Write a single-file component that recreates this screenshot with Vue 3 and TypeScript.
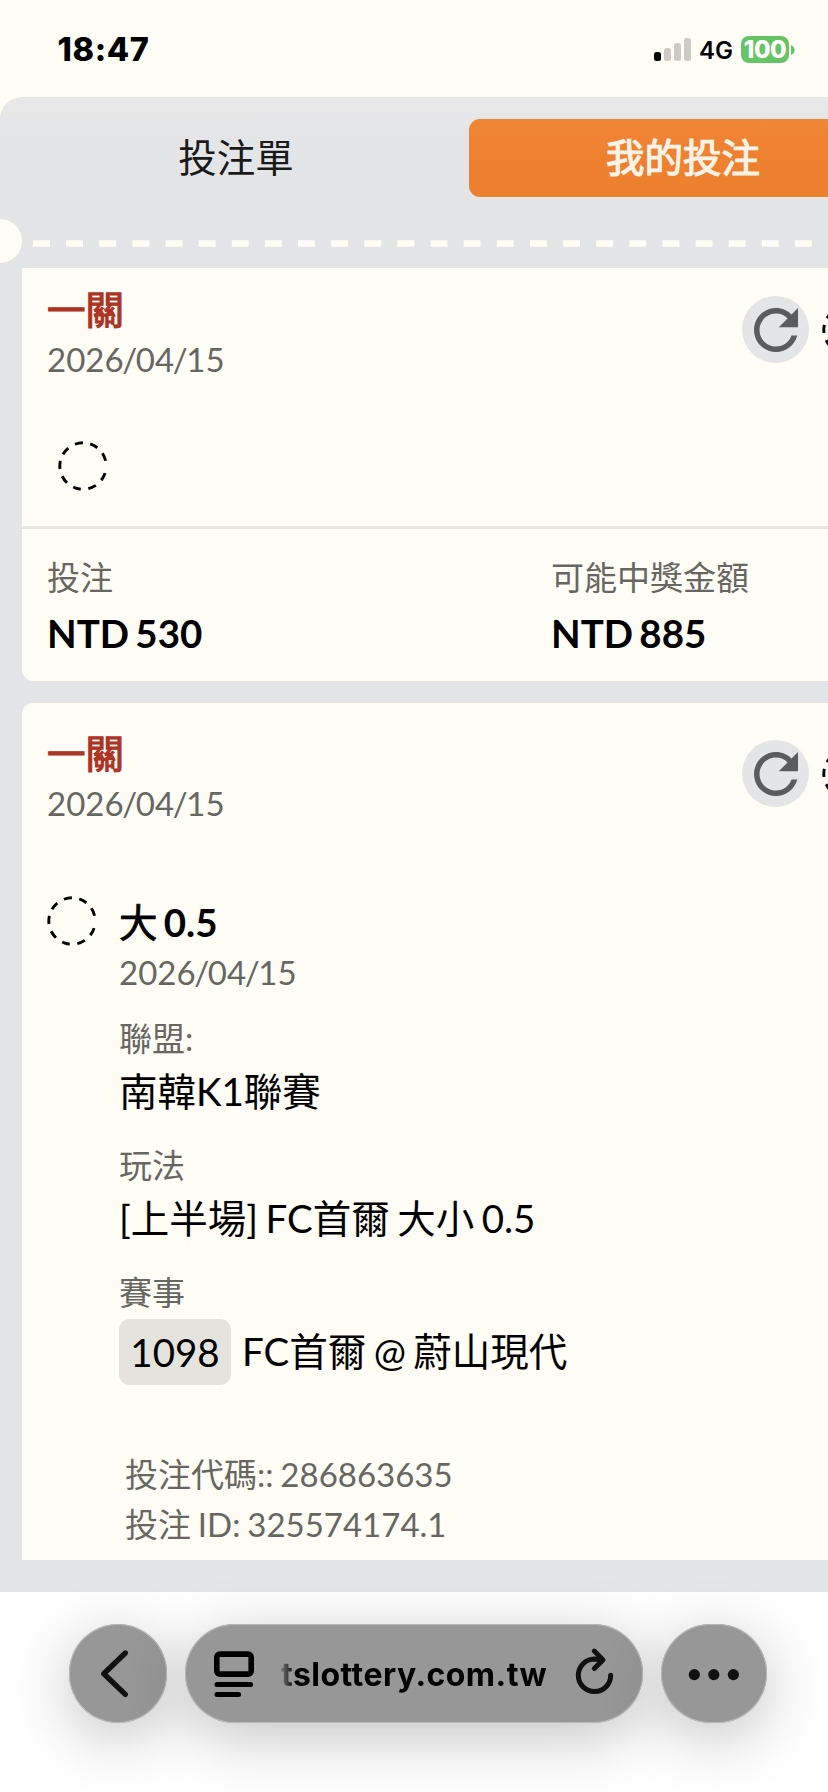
<script setup lang="ts">
interface Field {
  label: string
  value: string
}

const signalBars = [9, 13, 18, 23]
const dateParts = ['2026', '04', '15']

const totals: Field[] = [
  { label: '投注', value: 'NTD 530' },
  { label: '可能中獎金額', value: 'NTD 885' },
]

const details: Field[] = [
  { label: '聯盟:', value: '南韓K1聯賽' },
  { label: '玩法', value: '[上半場] FC首爾 大小 0.5' },
]

const dashes = [...Array(8).fill('20 18.6'), '20 31.2'].join(' ')
const refreshPath =
  'M17.65 6.35C16.2 4.9 14.21 4 12 4c-4.42 0-7.99 3.58-7.99 8s3.57 8 7.99 8c3.73 0 6.84-2.55 7.73-6h-2.08c-.82 2.33-3.04 4-5.65 4-3.31 0-6-2.69-6-6s2.69-6 6-6c1.66 0 3.14.69 4.22 1.78L13 11h7V4l-2.35 2.35z'
</script>

<template>
  <div class="screen">
    <header class="status">
      <span class="time">18:47</span>
      <div class="indicators">
        <div class="signal">
          <i v-for="(h, i) in signalBars" :key="h" :class="{ on: i === 0 }" :style="{ height: h + 'px' }"></i>
        </div>
        <span class="network">4G</span>
        <span class="battery">100</span>
        <svg class="nub" width="4" height="10" viewBox="0 0 4 10"><path d="M0 0Q3.6 1.6 3.6 5T0 10Z" fill="#65c466" /></svg>
      </div>
    </header>

    <main class="panel">
      <nav class="tabs">
        <div class="tab">投注單</div>
        <div class="tab active">我的投注</div>
      </nav>

      <div class="tear">
        <span class="notch"></span>
        <svg class="perforation" width="795" height="7">
          <line x1="0" y1="3.5" x2="795" y2="3.5" stroke="#fffdf6" stroke-width="6.4" stroke-dasharray="16.9 16.23" />
        </svg>
      </div>

      <section class="card first">
        <div class="head">
          <div>
            <div class="title">一關</div>
            <div class="muted"><template v-for="(p, i) in dateParts" :key="p"><span v-if="i" class="slash">/</span>{{ p }}</template></div>
          </div>
          <div class="actions">
            <span class="refresh"><svg width="66" height="66" viewBox="0 0 24 24"><path :d="refreshPath" fill="#5b5c5e" /></svg></span>
            <svg class="loader" width="50" height="50" viewBox="-25 -25 50 50"><circle r="23.2" pathLength="360" :stroke-dasharray="dashes" /></svg>
          </div>
        </div>
        <svg class="loader pending" width="50" height="50" viewBox="-25 -25 50 50"><circle r="23.2" pathLength="360" :stroke-dasharray="dashes" /></svg>
        <div class="totals">
          <div v-for="t in totals" :key="t.label" class="total">
            <div class="muted">{{ t.label }}</div>
            <div class="strong">{{ t.value }}</div>
          </div>
        </div>
      </section>

      <section class="card second">
        <div class="head">
          <div>
            <div class="title">一關</div>
            <div class="muted"><template v-for="(p, i) in dateParts" :key="p"><span v-if="i" class="slash">/</span>{{ p }}</template></div>
          </div>
          <div class="actions">
            <span class="refresh"><svg width="66" height="66" viewBox="0 0 24 24"><path :d="refreshPath" fill="#5b5c5e" /></svg></span>
            <svg class="loader" width="50" height="50" viewBox="-25 -25 50 50"><circle r="23.2" pathLength="360" :stroke-dasharray="dashes" /></svg>
          </div>
        </div>
        <div class="bet">
          <svg class="loader" width="50" height="50" viewBox="-25 -25 50 50"><circle r="23.2" pathLength="360" :stroke-dasharray="dashes" /></svg>
          <div class="info">
            <div class="strong pick"><span class="han">大</span> 0.5</div>
            <div class="muted when"><template v-for="(p, i) in dateParts" :key="p"><span v-if="i" class="slash">/</span>{{ p }}</template></div>
            <div v-for="d in details" :key="d.label" class="field">
              <div class="muted">{{ d.label }}</div>
              <div class="value">{{ d.value }}</div>
            </div>
            <div class="field">
              <div class="muted">賽事</div>
              <div class="match"><span class="badge">1098</span><span class="teams">FC首爾 @ 蔚山現代</span></div>
            </div>
            <div class="codes">
              <div class="muted">投注代碼:: 286863635</div>
              <div class="muted">投注 ID: 325574174.1</div>
            </div>
          </div>
        </div>
      </section>
    </main>

    <footer class="toolbar">
      <div class="pill back">
        <svg width="98" height="99" viewBox="69 1624 98 99" fill="none" stroke="#111" stroke-width="5.4" stroke-linecap="round" stroke-linejoin="round"><path d="M125.3 1653L103.8 1673.8L125.3 1694.4" /></svg>
      </div>
      <div class="pill address">
        <svg class="page" width="42" height="48" viewBox="213 1650 42 48" fill="none" stroke="#000" stroke-linecap="round">
          <rect x="216.8" y="1654.1" width="34.4" height="20" rx="3.2" stroke-width="5.6" />
          <path d="M217 1684.4H250.6M217 1694.6H238.6" stroke-width="5" />
        </svg>
        <span class="url">tslottery.com.tw</span>
        <svg class="reload" width="40" height="48" viewBox="574 1647 40 48" fill="none" stroke="#111" stroke-width="5" stroke-linecap="round" stroke-linejoin="round">
          <path d="M610.7 1675.2A16.2 16.2 0 1 1 594.3 1659.1L602.5 1659.9M594.3 1651.1L603 1659.9L594.3 1668.5" />
        </svg>
      </div>
      <div class="pill more">
        <svg width="106" height="99" viewBox="661 1624 106 99" fill="#111"><circle cx="694.3" cy="1674.6" r="5.6" /><circle cx="713.8" cy="1674.6" r="5.6" /><circle cx="733.4" cy="1674.6" r="5.6" /></svg>
      </div>
    </footer>
  </div>
</template>

<style>
body {
  background: #fffdf6;
  overflow: hidden;
}
</style>

<style scoped>
.screen {
  width: 828px;
  height: 1792px;
  overflow: hidden;
  display: flex;
  flex-direction: column;
  background: #fffdf6;
  font-family: Lato, "Noto Sans CJK TC", sans-serif;
  color: #000;
}
svg {
  display: block;
  flex: none;
}
.status {
  height: 97px;
  flex: none;
  display: flex;
  justify-content: space-between;
  font-family: Inter, sans-serif;
}
.time {
  padding-left: 57.5px;
  margin-top: 30px;
  font-size: 32.5px;
  line-height: 40px;
  font-weight: 800;
  letter-spacing: 0.6px;
}
.indicators {
  display: flex;
  height: 27px;
  margin-top: 36px;
  padding-right: 34px;
  align-items: center;
}
.signal {
  display: flex;
  gap: 3px;
  align-items: flex-end;
  height: 23px;
}
.signal i {
  width: 7px;
  border-radius: 2.5px;
  background: #cccbc5;
}
.signal .on {
  background: #000;
}
.network {
  width: 33px;
  margin: 2px 9px 0 8px;
  font-size: 24px;
  line-height: 27px;
  font-weight: 600;
}
.battery {
  width: 48px;
  height: 27px;
  border-radius: 8px;
  background: #65c466;
  color: #fff;
  font-size: 24px;
  line-height: 27px;
  font-weight: 800;
  text-align: center;
  letter-spacing: -0.5px;
}
.nub {
  margin-left: 2px;
  margin-right: -1px;
}
.panel {
  height: 1495px;
  flex: none;
  border-top-left-radius: 22px;
  background: linear-gradient(#e8e8e8, #e4e5e7 40px);
}
.tabs {
  display: flex;
  padding-top: 22px;
}
.tab {
  flex: none;
  width: 469px;
  height: 78px;
  padding: 0 54px 0 57px;
  box-sizing: border-box;
  text-align: center;
  font-size: 38.5px;
  line-height: 76px;
  color: #1a1a1a;
}
.active {
  width: 428px;
  padding: 0;
  border-radius: 11px;
  background: linear-gradient(#f08536, #ee8130 40px);
  color: #fff3e8;
  -webkit-text-stroke: 1.2px #fff3e8;
}
.tear {
  height: 71px;
  display: flex;
  align-items: center;
}
.notch {
  width: 22px;
  height: 44px;
  margin-top: 17px;
  border-radius: 0 22px 22px 0;
  background: #fffdf6;
}
.perforation {
  margin: 21px 0 0 11px;
}
.card {
  width: 880px;
  margin-left: 22px;
  padding-left: 25px;
  box-sizing: border-box;
  background: #fffdf6;
}
.first {
  height: 413px;
  padding-top: 18px;
  border-radius: 0 0 11px 11px;
}
.second {
  height: 857px;
  margin-top: 22px;
  padding-top: 27px;
  border-radius: 11px 11px 0 0;
}
.head {
  display: flex;
  height: 96px;
}
.head > div:first-child {
  width: 695px;
  flex: none;
}
.title {
  height: 50px;
  font-size: 38.5px;
  line-height: 47px;
  color: #ac3425;
  -webkit-text-stroke: 1.2px #ac3425;
}
.muted {
  font-size: 33px;
  line-height: 44px;
  color: #676762;
  word-spacing: -1.6px;
}
.slash {
  margin: 0 -1.35px;
}
.title + .muted {
  margin-top: 1px;
}
.actions {
  display: flex;
  align-items: flex-start;
  gap: 13px;
  padding-top: 10px;
}
.refresh {
  width: 67px;
  height: 67px;
  border-radius: 50%;
  background: #e4e5e7;
}
.refresh svg {
  margin: 1px 0 0 1px;
}
.actions .loader {
  margin-top: 9px;
}
.loader circle {
  fill: none;
  stroke: #000;
  stroke-width: 2.9;
  transform: rotate(18deg);
}
.pending {
  margin: 59px 0 0 11px;
}
.totals {
  display: flex;
  margin: 35px 0 0 -25px;
  padding: 26px 0 0 25px;
  border-top: 3px solid #e7e5df;
}
.total {
  width: 504px;
  flex: none;
}
.strong {
  font-size: 38.5px;
  line-height: 50px;
  font-weight: 700;
  word-spacing: -3.1px;
}
.han {
  font-weight: 400;
  -webkit-text-stroke: 0.8px #000;
}
.total .strong {
  margin-top: 9px;
}
.bet {
  display: flex;
  gap: 22px;
  margin-top: 70px;
}
.info {
  padding-top: 1px;
}
.when {
  margin-top: 3px;
}
.field {
  padding-top: 22px;
}
.field + .field {
  padding-top: 27px;
}
.value,
.match {
  font-size: 38.5px;
  line-height: 50px;
  white-space: nowrap;
  word-spacing: -2.4px;
}
.value {
  margin-top: 6px;
}
.match {
  display: flex;
  line-height: 66px;
  margin-top: 5px;
}
.badge {
  width: 112px;
  height: 66px;
  border-radius: 11px;
  background: #e5e3dd;
  text-align: center;
}
.teams {
  margin: -1px 0 0 11px;
}
.codes {
  padding: 67px 0 0 6px;
}
.codes .muted + .muted {
  margin-top: 6px;
}
.toolbar {
  height: 168px;
  padding: 32px 61px 0 69px;
  display: flex;
  justify-content: space-between;
  background: #fff;
}
.pill {
  height: 99px;
  border-radius: 50px;
  background: #979797;
  box-shadow: inset 0 0 0 1px #b9b9b9, 0 14px 62px rgba(0, 0, 0, 0.24);
}
.back {
  width: 98px;
}
.more {
  width: 106px;
}
.address {
  width: 458px;
  display: flex;
}
.page {
  margin: 26px 0 0 28px;
}
.url {
  width: 268px;
  margin: 31px 0 0 26px;
  font: 700 32px/40px Inter, sans-serif;
  letter-spacing: 0.45px;
  font-variant-ligatures: none;
  white-space: nowrap;
  -webkit-mask-image: linear-gradient(90deg, rgba(0, 0, 0, 0.2), #000 14px);
  mask-image: linear-gradient(90deg, rgba(0, 0, 0, 0.2), #000 14px);
}
.reload {
  margin: 23px 0 0 25px;
}
</style>
